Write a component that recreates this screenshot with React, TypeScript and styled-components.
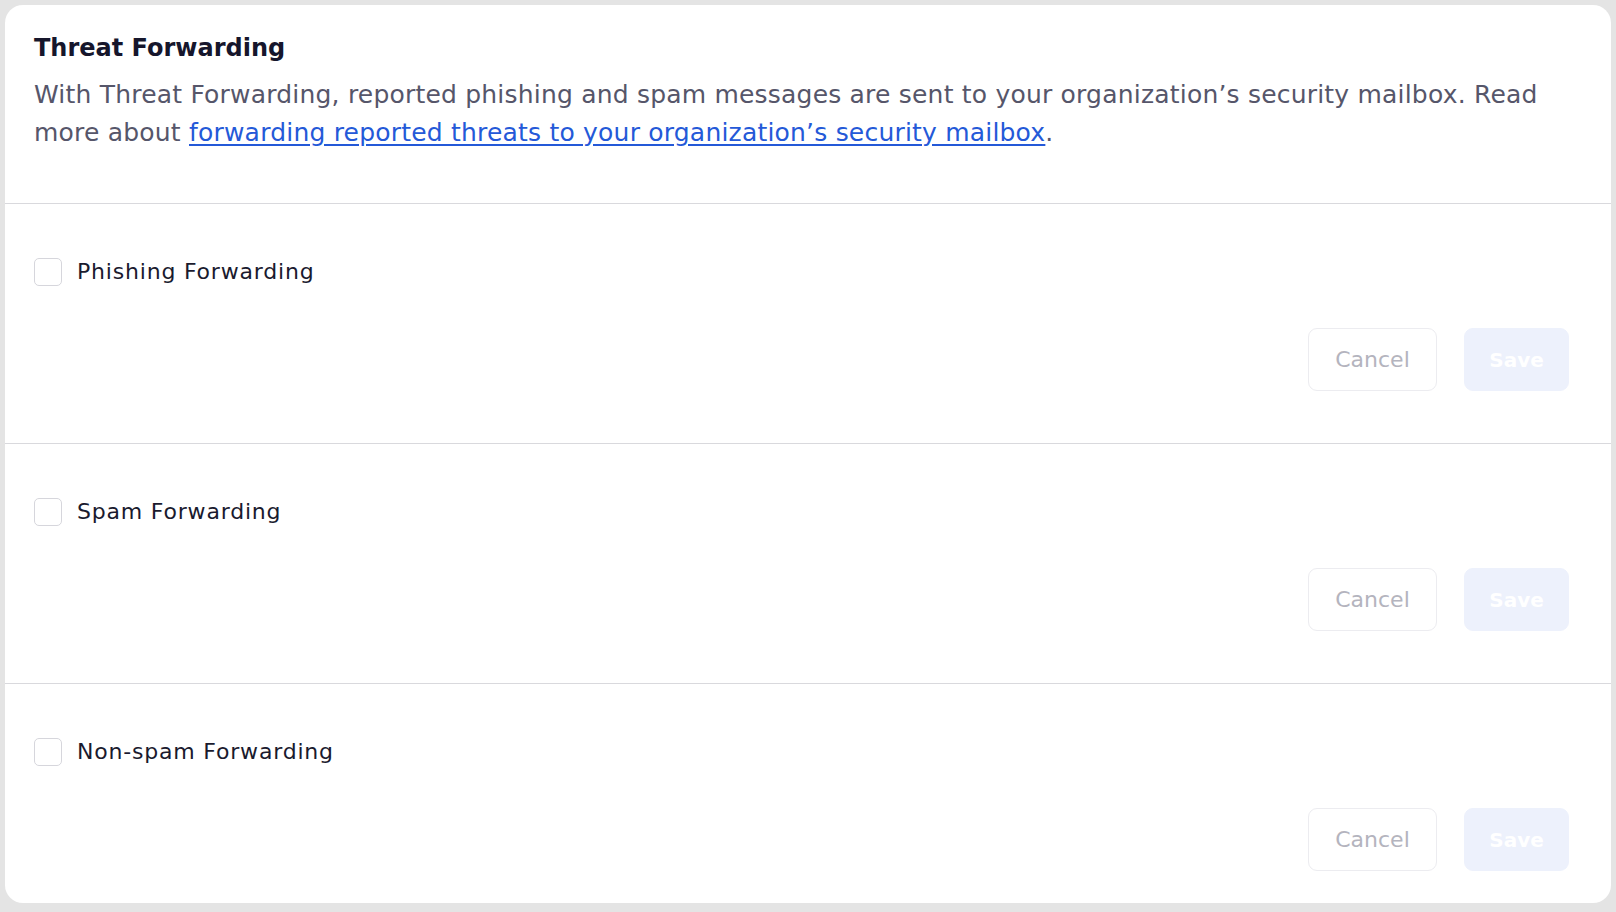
import React from 'react';
import styled, { createGlobalStyle } from 'styled-components';

const GlobalStyle = createGlobalStyle`
  html,
  body {
    margin: 0;
    padding: 0;
    background: #e4e4e4;
  }

  body {
    font-family: 'DejaVu Sans', 'Liberation Sans', sans-serif;
  }
`;

const Page = styled.div`
  padding: 5px;
`;

const Card = styled.div`
  height: 898px;
  overflow: hidden;
  background: #fff;
  border-radius: 18px;
`;

const Header = styled.div`
  padding: 28px 42px 51px 29px;
  border-bottom: 1px solid #d9d9dd;
`;

const Title = styled.h2`
  margin: 0;
  font-size: 24px;
  font-weight: bold;
  line-height: 30px;
  color: #16162c;
`;

const Description = styled.p`
  margin: 13px 0 0;
  font-size: 25px;
  letter-spacing: 0.2px;
  line-height: 38px;
  color: #56566a;
`;

const Link = styled.a`
  color: #2459d8;
  text-decoration: underline;
  text-underline-offset: 3px;
`;

const Section = styled.div<{ $last?: boolean }>`
  display: flex;
  flex-direction: column;
  gap: 42px;
  padding: 54px 42px 52px 29px;
  border-bottom: ${({ $last }) => ($last ? 'none' : '1px solid #d9d9dd')};
`;

const CheckRow = styled.label`
  display: flex;
  align-items: center;
  gap: 15px;
  font-size: 22px;
  letter-spacing: 0.8px;
  line-height: 28px;
  color: #1a1a2e;
  cursor: pointer;
`;

const Box = styled.span`
  box-sizing: border-box;
  width: 28px;
  height: 28px;
  border: 1px solid #d6d6dc;
  border-radius: 5px;
  background: #fff;
`;

const Actions = styled.div`
  display: flex;
  justify-content: flex-end;
  gap: 27px;
`;

const Button = styled.button<{ $primary?: boolean }>`
  box-sizing: border-box;
  height: 63px;
  width: ${({ $primary }) => ($primary ? '105px' : '129px')};
  padding: 0;
  font-family: inherit;
  font-size: ${({ $primary }) => ($primary ? '20px' : '22px')};
  border-radius: 9px;
  border: 1px solid ${({ $primary }) => ($primary ? '#edf1fc' : '#ececf0')};
  background: ${({ $primary }) => ($primary ? '#edf1fc' : '#fff')};
  color: ${({ $primary }) => ($primary ? '#fff' : '#b4b4be')};
  font-weight: ${({ $primary }) => ($primary ? 'bold' : 'normal')};
  cursor: default;
`;

const options = ['Phishing Forwarding', 'Spam Forwarding', 'Non-spam Forwarding'];

const App: React.FC = () => {
  return (
    <Page>
      <GlobalStyle />
      <Card>
        <Header>
          <Title>Threat Forwarding</Title>
          <Description>
            With Threat Forwarding, reported phishing and spam messages are sent to your organization’s security
            mailbox. Read more about{' '}
            <Link href="#">forwarding reported threats to your organization’s security mailbox</Link>.
          </Description>
        </Header>
        {options.map((label, i) => (
          <Section key={label} $last={i === options.length - 1}>
            <CheckRow>
              <Box />
              {label}
            </CheckRow>
            <Actions>
              <Button disabled>Cancel</Button>
              <Button $primary disabled>
                Save
              </Button>
            </Actions>
          </Section>
        ))}
      </Card>
    </Page>
  );
};

export default App;
